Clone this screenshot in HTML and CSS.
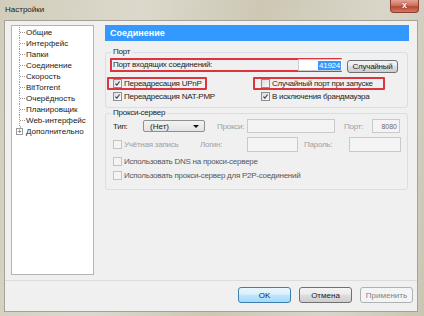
FILE: index.html
```html
<!DOCTYPE html>
<html lang="ru">
<head>
<meta charset="utf-8">
<title>Настройки</title>
<link rel="stylesheet" href="styles.css">
</head>
<body>
<div class="window">
  <div class="titlebar">
    <span class="title">Настройки</span>
    <span class="close">x</span>
  </div>
  <div class="client">
    <div class="main">
      <div class="tree">
        <ul>
          <li>Общие</li>
          <li>Интерфейс</li>
          <li>Папки</li>
          <li>Соединение</li>
          <li>Скорость</li>
          <li>BitTorrent</li>
          <li>Очерёдность</li>
          <li>Планировщик</li>
          <li>Web-интерфейс</li>
          <li class="last"><span class="plus">+</span>Дополнительно</li>
        </ul>
      </div>
      <div class="panel">
        <div class="header">Соединение</div>
        <fieldset class="group port">
          <legend>Порт</legend>
          <div class="row1">
            <div class="redbox portbox">
              <span class="lbl">Порт входящих соединений:</span>
              <span class="input portin"><span class="sel">41924</span></span>
            </div>
            <span class="btn rnd">Случайный</span>
          </div>
          <div class="grid">
            <div class="cell redbox w-upnp"><span class="cb"><svg viewBox="0 0 9 9"><path d="M1.8 4.6 L3.7 6.6 L7.2 1.9"/></svg></span>Переадресация UPnP</div>
            <div class="cell c2 redbox w-rand"><span class="cb"></span>Случайный порт при запуске</div>
            <div class="cell"><span class="cb"><svg viewBox="0 0 9 9"><path d="M1.8 4.6 L3.7 6.6 L7.2 1.9"/></svg></span>Переадресация NAT-PMP</div>
            <div class="cell c2"><span class="cb"><svg viewBox="0 0 9 9"><path d="M1.8 4.6 L3.7 6.6 L7.2 1.9"/></svg></span>В исключения брандмауэра</div>
          </div>
        </fieldset>
        <fieldset class="group proxy">
          <legend>Прокси-сервер</legend>
          <div class="prow pa">
            <span class="l-type">Тип:</span>
            <span class="combo">(Нет)<span class="arrow"></span></span>
            <span class="l-proxy dim">Прокси:</span>
            <span class="input dis"></span>
            <span class="l-port dim">Порт:</span>
            <span class="input dis w-port">8080</span>
          </div>
          <div class="prow pb">
            <span class="c-acc dim"><span class="cb dis"></span>Учётная запись</span>
            <span class="l-login dim">Логин:</span>
            <span class="input dis tall"></span>
            <span class="l-pass dim">Пароль:</span>
            <span class="input dis tall"></span>
          </div>
          <div class="prow pc mid"><span class="cb dis"></span>Использовать DNS на прокси-сервере</div>
          <div class="prow pd mid"><span class="cb dis"></span>Использовать прокси-сервер для P2P-соединений</div>
        </fieldset>
      </div>
    </div>
    <div class="footer">
      <span class="btn fbtn ok">OK</span>
      <span class="btn fbtn">Отмена</span>
      <span class="btn fbtn dis">Применить</span>
    </div>
  </div>
</div>
</body>
</html>
```

FILE: styles.css
```css
* { box-sizing: border-box; }
html, body { margin: 0; padding: 0; }
body {
  width: 424px;
  height: 316px;
  overflow: hidden;
  font-family: "Liberation Sans", Arial, sans-serif;
  font-size: 8px;
  letter-spacing: -0.25px;
  color: #1e1e1e;
}
.window {
  width: 424px;
  height: 316px;
  display: flex;
  flex-direction: column;
  background: linear-gradient(100deg, #d2cdbb 0%, #dcd9cc 30%, #cdc8b4 55%, #d9d6c9 80%, #cbc6b2 100%);
}
.titlebar {
  height: 20px;
  display: flex;
  align-items: flex-start;
  padding-left: 5px;
}
.title {
  margin-top: 5px;
  line-height: 10px;
  font-size: 8px;
  letter-spacing: 0;
  color: #222;
}
.close {
  margin-left: auto;
  margin-right: 5px;
  width: 29px;
  height: 13px;
  border: 1px solid #8a3d32;
  border-top: none;
  border-radius: 0 0 4px 4px;
  background: linear-gradient(#e3a396, #cc6a57 50%, #b9482f 55%, #d07a62);
  color: #fff;
  font-weight: bold;
  font-size: 9px;
  letter-spacing: 0;
  line-height: 11px;
  text-align: center;
  text-shadow: 0 0 2px #6a1c10;
}
.client {
  flex: 1;
  margin: 0 6px 4px 4px;
  background: #f0f0f0;
  border: 1px solid #a6a396;
  display: flex;
  flex-direction: column;
}
.main {
  height: 259px;
  display: flex;
  align-items: flex-start;
}
.tree {
  margin: 4px 0 0 6px;
  width: 83px;
  height: 250px;
  background: #fff;
  border: 1px solid #b4b4b4;
  letter-spacing: 0;
}
.tree ul {
  list-style: none;
  margin: 1px 0 0 7px;
  padding: 0;
}
.tree li {
  height: 11px;
  line-height: 11px;
  display: flex;
  align-items: center;
  border-left: 1px dotted #9a9a9a;
  color: #1a1a1a;
  white-space: nowrap;
}
.tree li::before {
  content: "";
  width: 5px;
  border-top: 1px dotted #9a9a9a;
  margin-right: 1px;
}
.tree li.last {
  border-left: 1px solid transparent;
  background: linear-gradient(#b0b0b0, #b0b0b0) 0 0 / 1px 5px no-repeat;
}
.tree li.last::before { display: none; }
.plus {
  width: 7px;
  height: 7px;
  margin-left: -4px;
  margin-right: 3px;
  border: 1px solid #9a9a9a;
  background: #fff;
  font-size: 7px;
  line-height: 5px;
  text-align: center;
  color: #444;
}
.panel {
  margin: 4px 0 0 11px;
  width: 304px;
  display: flex;
  flex-direction: column;
}
.header {
  height: 16px;
  background: #3399ff;
  color: #fff;
  font-weight: bold;
  font-size: 9px;
  letter-spacing: 0;
  line-height: 16px;
  padding-left: 5px;
}
.group {
  margin: 0;
  padding: 0;
  min-width: 0;
  border: 1px solid #d5dfe5;
  border-radius: 3px;
  width: 303px;
}
.group legend {
  margin-left: 5px;
  padding: 0 2px;
  line-height: 10px;
  height: 10px;
}
.port {
  margin-top: 6px;
  padding-bottom: 4px;
}
.row1 {
  display: flex;
  align-items: flex-start;
  margin: 1px 0 0 4px;
  height: 15px;
}
.redbox { border: 2px solid #dc3540 !important; border-radius: 1px; }
.portbox {
  width: 232px;
  height: 14px;
  display: flex;
  align-items: center;
  padding-left: 1px;
  border-right: none !important;
}
.portbox .lbl { line-height: 10px; }
.input {
  display: flex;
  align-items: center;
  background: #fff;
  border: 1px solid #abadb3;
  height: 14px;
}
.portin {
  margin-left: auto;
  width: 44px;
  height: 12px;
  border: 1px solid #c9cbd0;
  border-right: none;
  justify-content: flex-end;
  padding-right: 1px;
}
.sel {
  background: #3399ff;
  color: #fff;
  line-height: 9px;
  padding: 0 1px;
}
.btn {
  display: inline-flex;
  align-items: center;
  justify-content: center;
  border: 1px solid #707070;
  border-radius: 3px;
  background: linear-gradient(#f3f3f3 0%, #ebebeb 45%, #dddddd 50%, #cfcfcf 100%);
  color: #1e1e1e;
}
.rnd {
  width: 51px;
  height: 13px;
  margin: 2px 0 0 5px;
}
.grid {
  display: grid;
  grid-template-columns: 146px 150px;
  justify-items: start;
  margin: 4px 0 0 1px;
}
.cell {
  height: 13px;
  border: 2px solid transparent;
  display: flex;
  align-items: center;
  padding-left: 4px;
  white-space: nowrap;
}
.cell.c2 { padding-left: 6px; }
.w-upnp { width: 100px; }
.w-rand { width: 132px; }
.cb {
  width: 9px;
  height: 9px;
  flex: none;
  border: 1px solid #8e8f8f;
  background: linear-gradient(135deg, #dcdcdc, #fbfbfb);
  margin-right: 2px;
  display: inline-block;
}
.cb svg { display: block; width: 7px; height: 7px; }
.cb path { fill: none; stroke: #2c3e66; stroke-width: 1.4; }
.cb.dis { border-color: #c3c3c3; background: #f4f4f4; }
.proxy {
  margin-top: 0;
  padding-bottom: 8px;
}
.prow {
  margin-left: 7px;
  white-space: nowrap;
  align-items: center;
}
.pa {
  display: grid;
  grid-template-columns: 30px 62px 42px 88px 37px 28px;
  height: 14px;
  margin-top: 1px;
}
.pb {
  display: grid;
  grid-template-columns: 87px 47px 51px 51px 52px;
  height: 15px;
  margin-top: 4px;
}
.pc, .pd { display: flex; height: 12px; }
.pc { margin-top: 3px; }
.pd { margin-top: 2px; }
.mid { color: #575757; }
.dim { color: #a0a0a0; }
.combo {
  height: 12px;
  border: 1px solid #8e8f8f;
  border-radius: 2px;
  background: linear-gradient(#f3f3f3, #e3e3e3);
  display: flex;
  align-items: center;
  padding-left: 6px;
  letter-spacing: 0;
}
.arrow {
  margin-left: auto;
  margin-right: 5px;
  width: 0;
  height: 0;
  border-left: 3px solid transparent;
  border-right: 3px solid transparent;
  border-top: 3px solid #111;
}
.l-proxy { padding-left: 12px; }
.l-port { padding-left: 9px; }
.l-pass { padding-left: 6px; }
.input.dis { background: #f4f4f4; border-color: #cacaca; }
.input.tall { height: 15px; }
.w-port { justify-content: flex-end; padding-right: 2px; color: #6d6d6d; font-size: 7px; letter-spacing: 0; }
.c-acc { display: flex; align-items: center; }
.footer {
  flex: 1;
  border-top: 1px solid #dcdcdc;
  display: flex;
  justify-content: flex-end;
  align-items: flex-start;
  gap: 8px;
  padding: 6px 4px 0 0;
}
.fbtn { width: 53px; height: 16px; letter-spacing: 0; }
.fbtn.ok {
  border-color: #3c7fb1;
  background: linear-gradient(#eaf6fd 0%, #d9f0fc 45%, #bee6fd 50%, #a7d9f5 100%);
}
.fbtn.dis {
  border-color: #adb2b5;
  background: #f4f4f4;
  color: #838383;
}
```
